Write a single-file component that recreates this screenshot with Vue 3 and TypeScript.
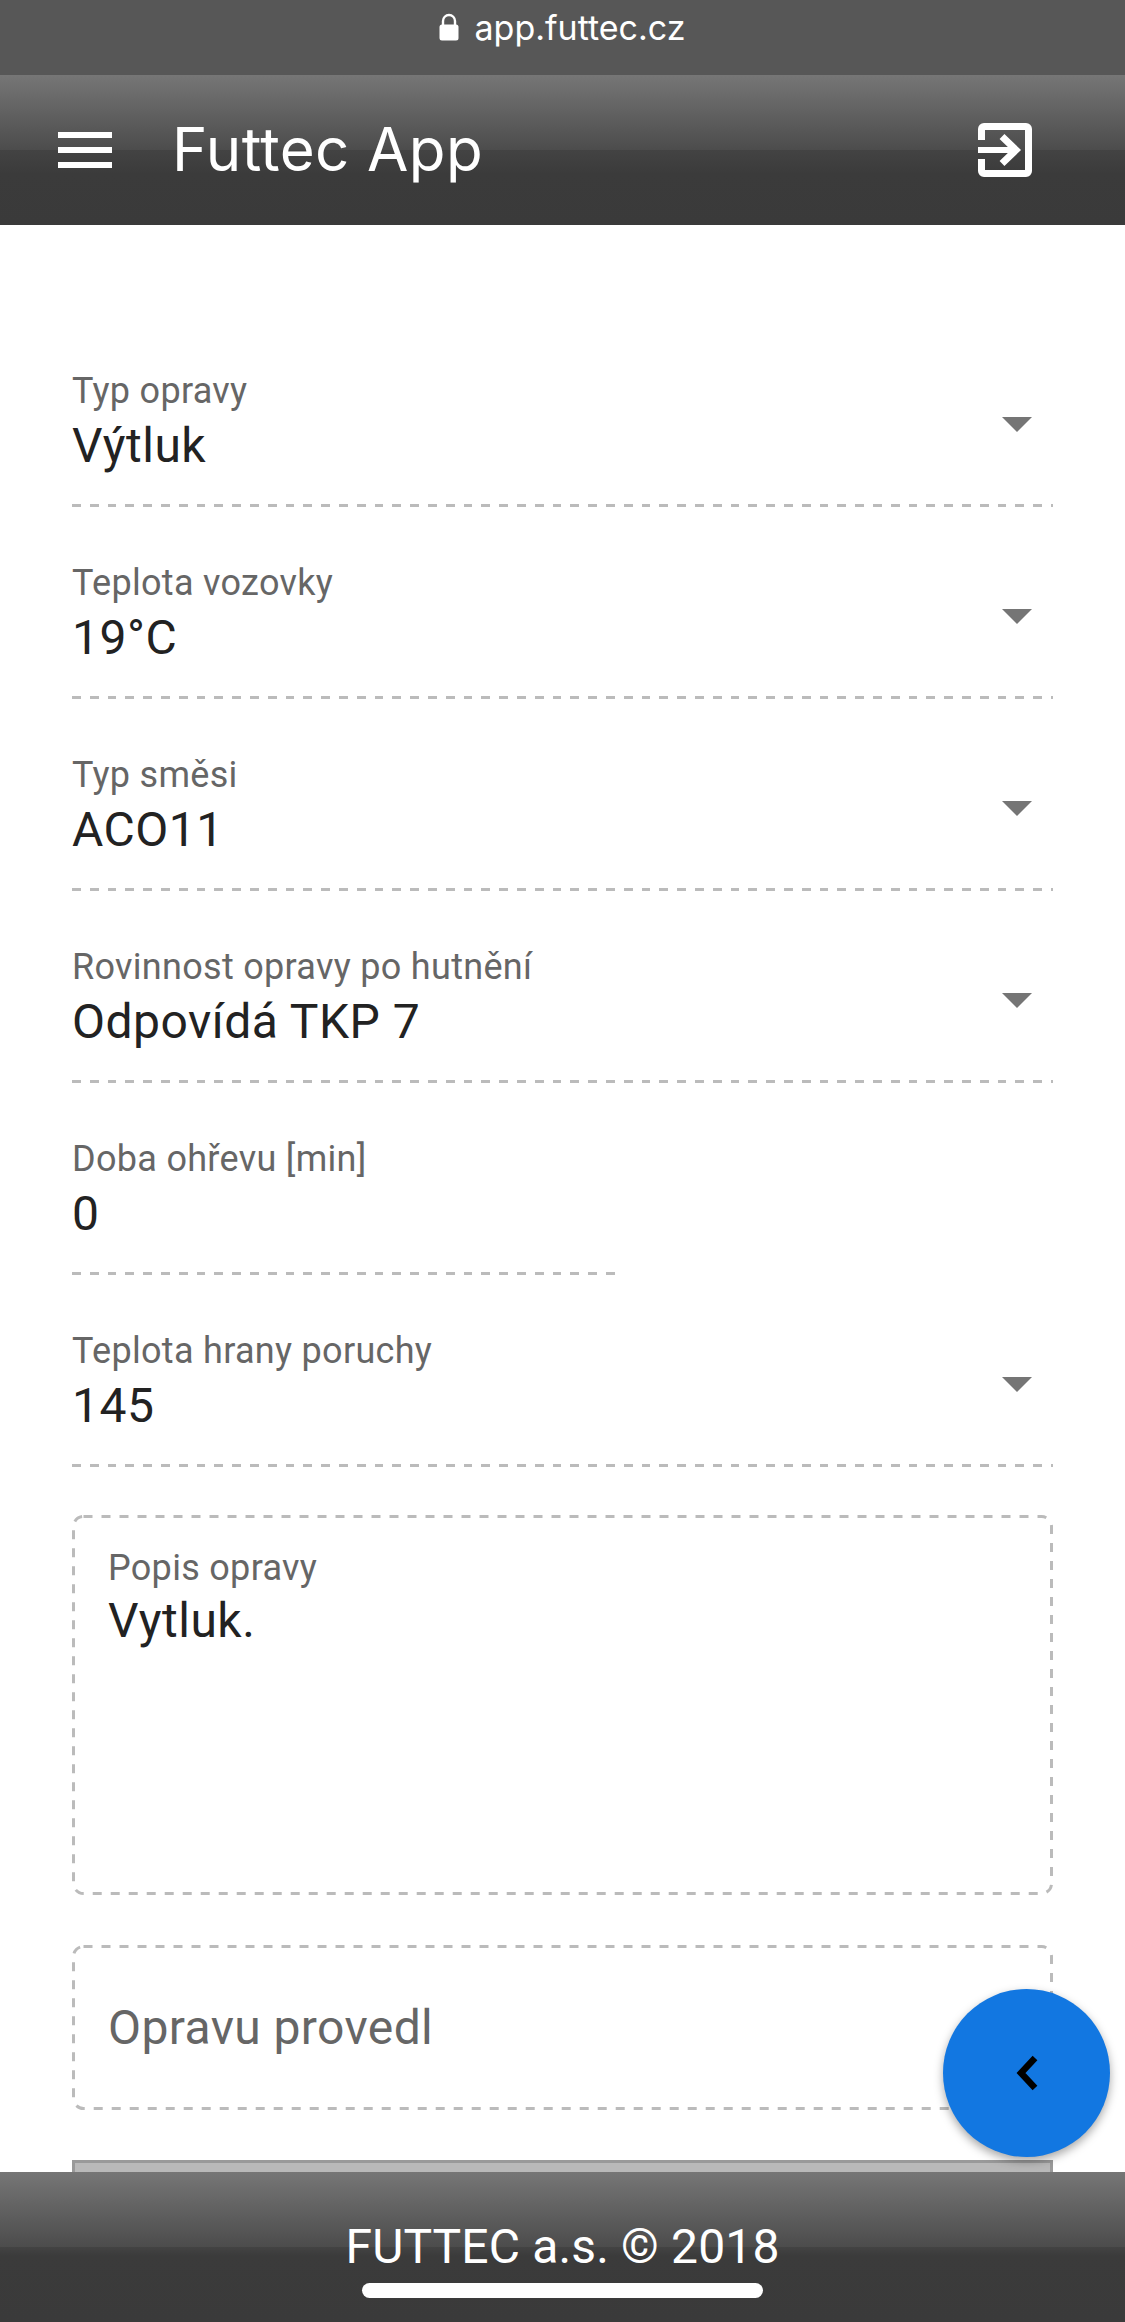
<script setup lang="ts">
interface Field {
  label: string
  value: string
  select: boolean
}

const fields: Field[] = [
  { label: 'Typ opravy', value: 'Výtluk', select: true },
  { label: 'Teplota vozovky', value: '19°C', select: true },
  { label: 'Typ směsi', value: 'ACO11', select: true },
  { label: 'Rovinnost opravy po hutnění', value: 'Odpovídá TKP 7', select: true },
  { label: 'Doba ohřevu [min]', value: '0', select: false },
  { label: 'Teplota hrany poruchy', value: '145', select: true },
]
</script>

<template>
  <div class="page">
    <div class="url-bar">
      <svg class="lock" viewBox="0 0 20 28" width="20" height="28">
        <path d="M4 12V8a6 6 0 0 1 12 0v4" fill="none" stroke="#fff" stroke-width="2.4" />
        <rect x="0.5" y="11.5" width="19" height="16" rx="2.5" fill="#fff" />
      </svg>
      <span>app.futtec.cz</span>
    </div>

    <header class="toolbar">
      <button class="icon-btn menu" type="button">
        <svg viewBox="0 0 54 36" width="54" height="36">
          <path d="M0 0h54v6H0zM0 15h54v6H0zM0 30h54v6H0z" fill="#fff" />
        </svg>
      </button>
      <div class="title">Futtec App</div>
      <button class="icon-btn logout" type="button">
        <svg viewBox="0 0 54 54" width="54" height="54">
          <path d="M3.5 17V6A2.5 2.5 0 0 1 6 3.5h42A2.5 2.5 0 0 1 50.500 6v42a2.500 2.500 0 0 1-2.500 2.500H6A2.500 2.500 0 0 1 3.500 48V36" fill="none" stroke="#fff" stroke-width="7" />
          <path d="M0 27h36" fill="none" stroke="#fff" stroke-width="6" />
          <path d="M24 13.500 38 27 24 40.500" fill="none" stroke="#fff" stroke-width="7" />
        </svg>
      </button>
    </header>

    <main class="content">
      <div
        v-for="field in fields"
        :key="field.label"
        class="field"
        :class="{ short: !field.select }"
      >
        <div class="field-text">
          <label>{{ field.label }}</label>
          <div class="value">{{ field.value }}</div>
        </div>
        <span v-if="field.select" class="caret"></span>
      </div>

      <div class="box notes">
        <svg class="outline"><rect rx="10" /></svg>
        <label>Popis opravy</label>
        <div class="value">Vytluk.</div>
      </div>

      <div class="box signed">
        <svg class="outline"><rect rx="10" /></svg>
        <span>Opravu provedl</span>
      </div>

      <div class="submit"></div>
    </main>

    <button class="fab" type="button">
      <svg viewBox="0 0 22 36" width="22" height="36">
        <path d="M19 3 5 18l14 15" fill="none" stroke="#000" stroke-width="6.500" />
      </svg>
    </button>

    <footer class="footer">
      <div class="copy">FUTTEC a.s. © 2018</div>
      <div class="home-bar"></div>
    </footer>
  </div>
</template>

<style>
html,
body {
  margin: 0;
  background: #fff;
}
</style>

<style scoped>
.page {
  position: relative;
  width: 1125px;
  height: 2322px;
  display: flex;
  flex-direction: column;
  overflow: hidden;
  background: #fff;
  font-family: Roboto, "Liberation Sans", sans-serif;
}

.url-bar {
  height: 75px;
  flex: none;
  background: #575757;
  color: #fff;
  display: flex;
  justify-content: center;
  align-items: flex-start;
  gap: 15px;
  padding-top: 8px;
  box-sizing: border-box;
  font-family: Inter, Roboto, sans-serif;
  font-size: 34px;
  line-height: 40px;
}

.lock {
  margin-top: 5px;
}

.toolbar {
  height: 150px;
  flex: none;
  box-sizing: border-box;
  display: flex;
  align-items: center;
  padding: 0 93px 0 58px;
  background: linear-gradient(#767676 0, #4c4c4c 50%, #434343 50%, #3b3b3b 66%, #3a3a3a 100%);
  color: #fff;
}

.icon-btn {
  border: 0;
  padding: 0;
  background: none;
  display: flex;
}

.title {
  flex: 1;
  margin: -2px 0 0 60px;
  font-family: Inter, Roboto, sans-serif;
  font-size: 60px;
  letter-spacing: 0.4px;
  line-height: 72px;
}

.content {
  flex: 1;
  min-height: 0;
  overflow: hidden;
  padding: 90px 72px 0;
}

.field {
  height: 192px;
  box-sizing: border-box;
  display: flex;
  align-items: flex-start;
  justify-content: space-between;
  background: repeating-linear-gradient(to right, #bbb 0, #bbb 8.9px, transparent 8.9px, transparent 17.8px) left bottom / 100% 3px no-repeat;
}

.field.short {
  width: 543px;
}

.field-text {
  padding-top: 54px;
}

label {
  display: block;
  font-size: 36px;
  letter-spacing: 0.3px;
  line-height: 44px;
  color: #666;
}

.value {
  margin-top: 4px;
  font-size: 48px;
  letter-spacing: 0.5px;
  line-height: 58px;
  color: #222;
}

.caret {
  margin: 102px 21px 0 0;
  width: 0;
  height: 0;
  border-left: 15px solid transparent;
  border-right: 15px solid transparent;
  border-top: 15px solid #757575;
}

.box {
  position: relative;
  box-sizing: border-box;
  padding: 0 36px;
}

/* dashed outline with a longer dash than a CSS dashed border gives */
.outline {
  position: absolute;
  inset: 0;
  width: 100%;
  height: 100%;
}

.outline rect {
  x: 1.5px;
  y: 1.5px;
  width: calc(100% - 3px);
  height: calc(100% - 3px);
  fill: none;
  stroke: #bbb;
  stroke-width: 3;
  stroke-dasharray: 9 9;
}

.notes {
  height: 380px;
  margin-top: 48px;
  padding-top: 31px;
}

.notes .value {
  margin-top: 2px;
}

.signed {
  height: 165px;
  margin-top: 50px;
  display: flex;
  align-items: center;
  font-size: 48px;
  letter-spacing: 0.4px;
  color: #666;
}

.submit {
  height: 40px;
  margin-top: 50px;
  background: #b9b9b9;
  border: 3px solid #999;
  box-sizing: border-box;
}

.fab {
  position: absolute;
  left: 943px;
  top: 1989px;
  width: 167px;
  height: 168px;
  padding: 0;
  border: 0;
  border-radius: 50%;
  background: #1277e1;
  box-shadow: 0 4px 10px rgba(0, 0, 0, 0.35);
  display: flex;
  align-items: center;
  justify-content: center;
}

.footer {
  height: 150px;
  flex: none;
  position: relative;
  background: linear-gradient(#767676 0, #4c4c4c 50%, #434343 50%, #3b3b3b 56%, #3a3a3a 100%);
  color: #fff;
  text-align: center;
  font-size: 48px;
  letter-spacing: 0.15px;
  box-sizing: border-box;
  padding-top: 45px;
}

.copy {
  line-height: 60px;
}

.home-bar {
  position: absolute;
  left: 362px;
  bottom: 24px;
  width: 401px;
  height: 15px;
  border-radius: 8px;
  background: #fff;
}
</style>
